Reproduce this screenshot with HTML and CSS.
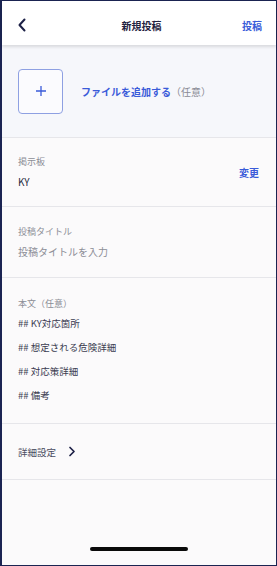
FILE: index.html
```html
<!DOCTYPE html>
<html lang="ja">
<head>
<meta charset="utf-8">
<link rel="stylesheet" href="styles.css">
</head>
<body>
<div class="screen">
  <header class="nav">
    <svg class="back" width="10" height="14" viewBox="0 0 10 14"><path d="M7.5 1.5 L2.5 7 L7.5 12.5" fill="none" stroke="#1c2046" stroke-width="2" stroke-linecap="round" stroke-linejoin="round"/></svg>
    <div class="nav-title">新規投稿</div>
    <div class="nav-action">投稿</div>
  </header>
  <section class="upload">
    <div class="upload-box">
      <svg width="12" height="12" viewBox="0 0 12 12"><path d="M6 1 V11 M1 6 H11" stroke="#3a5bd9" stroke-width="1.3"/></svg>
    </div>
    <div class="upload-text"><span class="upload-link">ファイルを追加する</span><span class="optional">（任意）</span></div>
  </section>
  <section class="row board">
    <div class="field">
      <div class="label">掲示板</div>
      <div class="value">KY</div>
    </div>
    <div class="change">変更</div>
  </section>
  <section class="row title-sec">
    <div class="field">
      <div class="label">投稿タイトル</div>
      <div class="placeholder">投稿タイトルを入力</div>
    </div>
  </section>
  <section class="row body-sec">
    <div class="label">本文（任意）</div>
    <ul class="lines">
      <li>## KY対応箇所</li>
      <li>## 想定される危険詳細</li>
      <li>## 対応策詳細</li>
      <li>## 備考</li>
    </ul>
  </section>
  <section class="row detail">
    <span class="detail-text">詳細設定</span>
    <svg width="8" height="11" viewBox="0 0 8 11"><path d="M2 1.5 L6 5.5 L2 9.5" fill="none" stroke="#1c2046" stroke-width="1.7" stroke-linecap="round" stroke-linejoin="round"/></svg>
  </section>
  <div class="spacer"></div>
  <div class="home"><div class="home-bar"></div></div>
</div>
</body>
</html>
```
FILE: styles.css
```css
* { box-sizing: border-box; margin: 0; padding: 0; }
html, body { width: 277px; height: 566px; overflow: hidden; }
body { font-family: "Noto Sans CJK JP", "Noto Sans", sans-serif; background: #fbfafb; }
.screen {
  width: 277px; height: 566px;
  border: 1px solid #1b2452; border-left-width: 2px;
  display: flex; flex-direction: column;
  background: #fbfafb;
}
.nav {
  height: 44px; flex: none;
  background: #ffffff;
  display: flex; align-items: center; justify-content: space-between;
  padding: 0 14px 0 15px;
  box-shadow: 0 2px 3px rgba(0,0,0,0.12);
  position: relative; z-index: 1;
}
.back { display: block; margin-top: 4px; }
.nav-title { font-size: 10px; font-weight: 700; color: #1f2240; margin-top: 4px; margin-left: 14px; }
.nav-action { font-size: 10px; font-weight: 700; color: #3a5bd9; margin-top: 4px; }
.upload {
  height: 93px; flex: none;
  background: #f6f7fb;
  border-bottom: 1px solid #e6e6ea;
  display: flex; align-items: center;
  padding: 0 0 0 16px;
}
.upload-box {
  width: 45px; height: 45px;
  border: 1px solid #8ea0e2; border-radius: 4px;
  background: #fbfbfe;
  display: flex; align-items: center; justify-content: center;
}
.upload-text { margin-left: 18px; font-size: 10px; }
.upload-link { color: #3a5bd9; font-weight: 700; }
.optional { color: #8a8b95; }
.row {
  flex: none;
  border-bottom: 1px solid #e6e6ea;
  padding: 0 17px 0 16px;
}
.board { height: 69px; display: flex; align-items: center; justify-content: space-between; }
.label { font-size: 9px; color: #8c8d96; line-height: 14px; }
.value { font-size: 10px; color: #2a2c3e; margin-top: 6px; line-height: 14px; }
.change { font-size: 10px; font-weight: 700; color: #3a5bd9; }
.title-sec { height: 71px; display: flex; align-items: center; }
.placeholder { font-size: 10px; color: #8c8d96; margin-top: 5px; line-height: 16px; }
.body-sec { height: 146px; padding-top: 19px; }
.lines { list-style: none; margin-top: 5px; }
.lines li { font-size: 9.5px; color: #3a3c50; line-height: 14px; margin-bottom: 10px; }
.detail { height: 56px; display: flex; align-items: center; }
.detail-text { font-size: 9.5px; color: #4a4c60; margin-right: 12px; }
.spacer { flex: 1; }
.home { height: 18px; flex: none; display: flex; justify-content: center; }
.home-bar { width: 98px; height: 4px; border-radius: 2px; background: #0a0a0a; }
```
